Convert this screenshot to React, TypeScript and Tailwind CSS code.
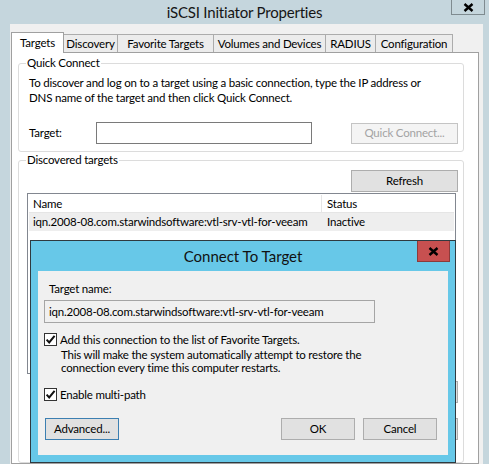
import React from "react";

const tabs = [
  { label: "Targets", w: "w-[53px]", active: true },
  { label: "Discovery", w: "w-[55px]" },
  { label: "Favorite Targets", w: "w-[97px]" },
  { label: "Volumes and Devices", w: "w-[113px]" },
  { label: "RADIUS", w: "w-[51px]" },
  { label: "Configuration", w: "w-[78px]" },
];

const iqn = "iqn.2008-08.com.starwindsoftware:vtl-srv-vtl-for-veeam";

function CloseGlyph() {
  return (
    <svg width="11" height="9" viewBox="0 0 11 9">
      <path d="M1.5 1 L9.5 8 M9.5 1 L1.5 8" stroke="#000" strokeWidth="2.4" fill="none" />
    </svg>
  );
}

function Check() {
  return (
    <span className="flex h-[13px] w-[13px] shrink-0 items-center justify-center border border-[#333333] bg-white">
      <svg width="11" height="11" viewBox="0 0 11 11">
        <path d="M1.6 5.6 L4.2 8.4 L9.6 1.8" fill="none" stroke="#111" strokeWidth="2" />
      </svg>
    </span>
  );
}

function WinButton({
  children,
  className = "",
}: {
  children?: React.ReactNode;
  className?: string;
}) {
  return (
    <button
      className={`flex h-[22px] items-center justify-center border border-[#adadad] bg-[#e1e1e1] ${className}`}
    >
      {children}
    </button>
  );
}

export default function App() {
  return (
    <div className="relative flex h-[464px] w-[489px] flex-col overflow-hidden whitespace-nowrap bg-[#c5d6dd] font-['Lato',sans-serif] text-[11.5px] leading-[16px] tracking-[-0.2px] text-black">
      {/* Title bar */}
      <div className="relative flex h-[24px] shrink-0 items-center justify-center">
        <span className="text-[15px] leading-[20px] tracking-[-0.2px] text-[#151515]">
          iSCSI Initiator Properties
        </span>
        <div className="absolute right-[4px] top-0 flex h-[15px] w-[34px] items-center justify-center border border-t-0 border-[#7f8b90]">
          <CloseGlyph />
        </div>
      </div>

      {/* Window body */}
      <div className="ml-[10px] mr-[6px] flex flex-1 flex-col bg-[#f0f0f0] pl-[1px] pr-[4px] pt-[8px]">
        {/* Tabs */}
        <div className="flex h-[21px] shrink-0 items-end">
          {tabs.map((t, i) =>
            t.active ? (
              <div
                key={t.label}
                className={`relative z-10 flex h-[21px] items-center justify-center border border-b-0 border-[#a0a0a0] bg-white ${t.w}`}
              >
                {t.label}
              </div>
            ) : (
              <div
                key={t.label}
                className={`flex h-[19px] items-center justify-center border border-b-0 border-[#acacac] bg-[#ececec] ${t.w} ${i > 0 ? "-ml-px" : ""}`}
              >
                {t.label}
              </div>
            )
          )}
        </div>

        {/* Tab panel */}
        <div className="-mt-px flex flex-1 flex-col border border-[#a0a0a0] bg-white pl-[6px] pr-[14px] pt-[2px]">
          {/* Quick Connect */}
          <fieldset className="rounded-[3px] border border-[#dcdcdc]">
            <legend className="ml-[7px] px-[1px] leading-[16px]">Quick Connect</legend>
            <div className="pb-[7px] pl-[10px] pr-[5px]">
              <p className="mt-[4px] leading-[15px]">
                To discover and log on to a target using a basic connection, type the IP address or
                <br />
                DNS name of the target and then click Quick Connect.
              </p>
              <div className="mt-[17px] flex h-[22px] items-center">
                <span className="w-[67px]">Target:</span>
                <div className="h-[22px] w-[216px] border border-[#7a7a7a] bg-white" />
                <button className="ml-[39px] flex h-[21px] w-[107px] items-center justify-center border border-[#c4c4c4] bg-[#f4f4f4] text-[#a3a3a3]">
                  Quick Connect...
                </button>
              </div>
            </div>
          </fieldset>

          {/* Discovered targets */}
          <fieldset className="flex-1 rounded-[3px] border border-[#dcdcdc]">
            <legend className="ml-[7px] px-[1px] leading-[16px]">Discovered targets</legend>
            <div className="pl-[8px] pr-[5px]">
              <div className="mt-[2px] flex justify-end">
                <WinButton className="w-[107px]">Refresh</WinButton>
              </div>
              <div className="mr-[2px] mt-[1px] h-[181px] border border-[#828790] p-[1px]">
                <div className="flex h-[18px] items-center border-b border-[#e5e5e5]">
                  <span className="flex h-full w-[293px] items-center border-r border-[#e5e5e5] pl-[4px]">
                    Name
                  </span>
                  <span className="pl-[5px]">Status</span>
                </div>
                <div className="flex h-[18px] items-center bg-[#eeeeee]">
                  <span className="w-[293px] pl-[4px]">{iqn}</span>
                  <span className="pl-[5px]">Inactive</span>
                </div>
              </div>
              {/* buttons hidden behind the dialog, only their edge shows */}
              <div className="mt-[7px] flex h-[22px] justify-end">
                <WinButton className="w-[86px]" />
              </div>
              <div className="mt-[15px] flex h-[22px] justify-end">
                <WinButton className="w-[86px] border-[#6f6f6f]" />
              </div>
            </div>
          </fieldset>
        </div>
      </div>

      {/* Connect To Target dialog */}
      <div className="absolute left-[30px] top-[240px] flex h-[223px] w-[426px] flex-col border border-[#2f3a40] bg-[#67c8e8]">
        <div className="relative flex h-[30px] shrink-0 items-center justify-center">
          <span className="text-[15px] leading-[20px] tracking-normal text-[#111]">Connect To Target</span>
          <div className="absolute right-[5px] top-0 flex h-[21px] w-[33px] items-center justify-center border border-t-0 border-[#8c3a3a] bg-[#c75050]">
            <CloseGlyph />
          </div>
        </div>
        <div className="mx-[7px] mb-[7px] flex flex-1 flex-col bg-[#f0f0f0] pl-[6px] pr-[11px] pt-[10px]">
          <span className="ml-[5px] leading-[16px]">Target name:</span>
          <div className="mt-[3px] flex h-[23px] w-[331px] items-center border border-[#a5a5a5] bg-[#f0f0f0] pl-[4px]">
            {iqn}
          </div>
          <div className="mt-[10px] flex items-start gap-[3px]">
            <Check />
            <div className="leading-[13px]">
              <div>Add this connection to the list of Favorite Targets.</div>
              <div className="mt-[2px] pl-[1px]">
                This will make the system automatically attempt to restore the
                <br />
                connection every time this computer restarts.
              </div>
            </div>
          </div>
          <div className="mt-[14px] flex items-center gap-[3px] leading-[13px]">
            <Check />
            <span>Enable multi-path</span>
          </div>
          <div className="mt-[17px] flex">
            <button className="ml-[1px] flex h-[22px] w-[74px] items-center justify-center border border-[#3c7fb1] bg-[#e1e1e1]">
              Advanced...
            </button>
            <div className="flex-1" />
            <WinButton className="w-[74px]">OK</WinButton>
            <WinButton className="ml-[8px] w-[74px]">Cancel</WinButton>
          </div>
        </div>
      </div>
    </div>
  );
}
